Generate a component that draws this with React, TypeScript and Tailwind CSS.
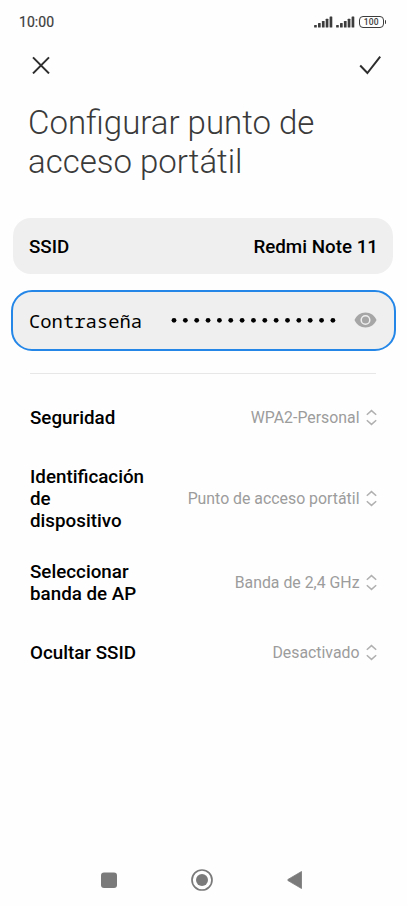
interface Setting {
    label: string;
    value: string;
}

const settings: Setting[] = [
    { label: "Seguridad", value: "WPA2-Personal" },
    { label: "Identificación de dispositivo", value: "Punto de acceso portátil" },
    { label: "Seleccionar banda de AP", value: "Banda de 2,4 GHz" },
    { label: "Ocultar SSID", value: "Desactivado" },
];

function SignalIcon() {
    return (
        <svg width="19" height="12" viewBox="0 0 19 12" fill="#3c3c3c">
            <rect x="0.1" y="9" width="2.7" height="2.5" rx="0.5" />
            <rect x="4" y="7" width="2.7" height="4.5" rx="0.5" />
            <rect x="7.9" y="5" width="2.7" height="6.5" rx="0.5" />
            <rect x="11.7" y="2.8" width="2.7" height="8.7" rx="0.5" />
            <rect x="15.6" y="0.5" width="2.7" height="11" rx="0.5" />
        </svg>
    );
}

function StatusBar() {
    return (
        <div className="flex h-11 items-center justify-between pl-[19px] pr-[21px] text-[#3c3c3c]">
            <span className="pt-px text-[14px] tracking-[0.05px] [-webkit-text-stroke:0.2px_#3c3c3c]">10:00</span>
            <div className="flex items-center">
                <SignalIcon />
                <span className="w-[3.5px]" />
                <SignalIcon />
                <span className="w-[4px]" />
                <div className="flex h-[12px] w-[24.5px] items-center justify-center rounded-[4px] border-[1.5px] border-[#3c3c3c] text-[8.5px] font-medium leading-none tracking-[0.1px]">
                    100
                </div>
                <span className="ml-[1px] h-[4px] w-[1.5px] rounded-r bg-[#3c3c3c]" />
            </div>
        </div>
    );
}

function UpDownIcon() {
    return (
        <svg className="ml-[6.5px] shrink-0" width="11" height="18" viewBox="0 0 11 18" fill="none" stroke="#b0b0b0" strokeWidth="1.5">
            <path d="M0.8 5.8 5.5 1.6l4.7 4.2M0.8 11.2 5.5 15.4l4.7-4.2" />
        </svg>
    );
}

function SettingRow({ label, value }: Setting) {
    return (
        <div className="flex min-h-[66px] items-center justify-between py-[15px]">
            <span className="w-[115px] text-[18.8px] font-medium leading-[21.8px] text-black">{label}</span>
            <div className="flex items-center pb-[2px]">
                <span className="whitespace-nowrap text-[15.85px] text-[#9c9c9c]">{value}</span>
                <UpDownIcon />
            </div>
        </div>
    );
}

export default function App() {
    return (
        <div className="flex h-[906px] w-[407px] flex-col bg-[#fefefe] font-['Roboto',sans-serif]">
            <StatusBar />

            <div className="flex h-[42px] items-center justify-between pl-[32px] pr-[25px]">
                <svg width="18" height="18" viewBox="0 0 18 18" fill="none" stroke="#2d2d2d" strokeWidth="2">
                    <path d="M1 1.4l16 16M17 1.4L1 17.4" />
                </svg>
                <svg width="23" height="20" viewBox="0 0 23 20" fill="none" stroke="#2d2d2d" strokeWidth="2">
                    <path d="M1.2 10.5l7.2 7.5L21.2 1.7" />
                </svg>
            </div>

            <h1 className="mt-[17px] pl-[28px] text-[33px] font-light leading-[39px] text-[#3a3a3a]">
                Configurar punto de
                <br />
                acceso portátil
            </h1>

            <div className="ml-[13px] mr-[14px] mt-[37px] flex h-[56px] items-center justify-between rounded-[18px] bg-[#efefef] pl-4 pr-[15px] pt-[3px] text-[18.8px] font-medium text-black">
                <span>SSID</span>
                <span>Redmi Note 11</span>
            </div>

            <div className="ml-[11px] mr-[11px] mt-4 flex h-[61px] items-center rounded-[21px] border-[2.5px] border-[#2487e8] bg-[#efefef] pb-px pl-4 pr-[17px]">
                <span className="pt-[2px] font-['Noto_Sans_Mono','DejaVu_Sans_Mono',monospace] text-[18.85px] text-black">Contraseña</span>
                <svg className="ml-auto" width="166" height="6" viewBox="0 0 166 6" fill="#000">
                    {Array.from({ length: 15 }, (_, i) => (
                        <circle key={i} cx={3 + i * 11.35} cy="3.3" r="2.4" />
                    ))}
                </svg>
                <svg className="ml-[17px]" width="23" height="16" viewBox="0 0 23 16">
                    <path d="M11.5 0.5C6.5 0.5 2.3 3.5 0.5 8c1.8 4.5 6 7.5 11 7.5s9.2-3 11-7.5c-1.8-4.5-6-7.5-11-7.5z" fill="#a6a6a6" />
                    <circle cx="11.5" cy="8" r="4.3" fill="#a6a6a6" stroke="#efefef" strokeWidth="1.5" />
                </svg>
            </div>

            <div className="ml-[30px] mr-[31px] mt-[22px] h-px bg-[#e7e7e7]" />

            <div className="mt-[12px] flex flex-col pl-[30px] pr-[30px]">
                {settings.map((s) => (
                    <SettingRow key={s.label} label={s.label} value={s.value} />
                ))}
            </div>

            <div className="mt-auto flex h-[52px] items-center justify-between pl-[101px] pr-[104px]">
                <svg width="16" height="16" viewBox="0 0 16 16" fill="#7a7a7a">
                    <rect y="0.4" width="16" height="15.6" rx="3" />
                </svg>
                <svg width="22" height="22" viewBox="0 0 22 22">
                    <circle cx="11" cy="11" r="10" fill="none" stroke="#7a7a7a" strokeWidth="1.7" />
                    <circle cx="11" cy="11" r="6" fill="#7a7a7a" />
                </svg>
                <svg width="16" height="18" viewBox="0 0 16 18" fill="#7a7a7a">
                    <path d="M14.5 0.5v17L1 9.6Q0 9 1 8.4z" stroke="#7a7a7a" strokeWidth="0.8" strokeLinejoin="round" />
                </svg>
            </div>
        </div>
    );
}
